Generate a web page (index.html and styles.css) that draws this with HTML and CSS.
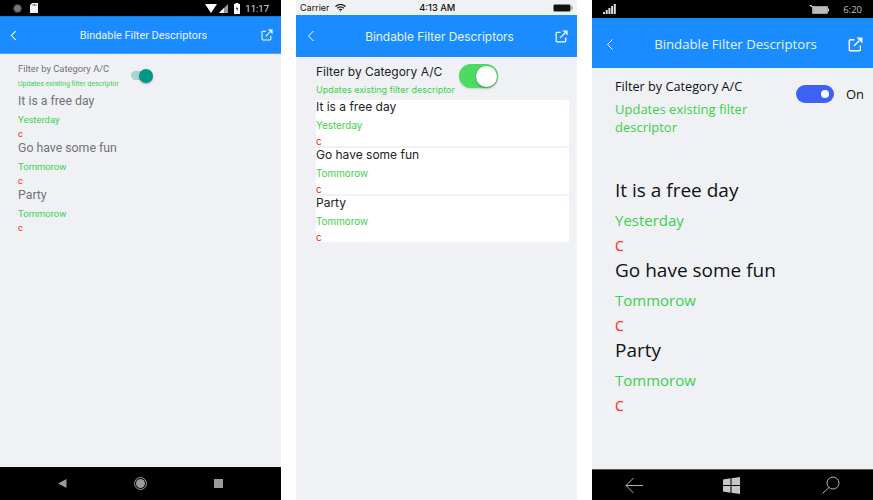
FILE: index.html
```html
<!DOCTYPE html>
<html lang="en">
<head>
    <meta charset="UTF-8" />
    <meta name="viewport" content="width=device-width, initial-scale=1.0" />
    <title>Bindable Filter Descriptors</title>
    <link rel="stylesheet" href="styles.css">
</head>
<body>
    <div class="page">
        <!-- Android -->
        <div class="phone android">
            <div class="status">
                <div class="status-left">
                    <span class="rec-dot"></span>
                    <svg width="8" height="10" viewBox="0 0 8 10"><path d="M2 0h6v10H0V2z" fill="#f2f2f2"/><path d="M3 1v2M4.500 1v2M6 1v2" stroke="#555" stroke-width=".7"/></svg>
                </div>
                <div class="status-right">
                    <svg width="12" height="9" viewBox="0 0 12 9"><path d="M0 0h12L6 9z" fill="#fff"/></svg>
                    <svg class="signal" width="9" height="9" viewBox="0 0 9 9"><path d="M9 0v9H0z" fill="#9a9a9a"/><path d="M5 4v5H0z" fill="#fff"/></svg>
                    <svg class="batt" width="6" height="11" viewBox="0 0 6 11"><path d="M1.500 0h3v1H6v10H0V1h1.500z" fill="#fff"/><path d="M3.300 3 1.800 6h1.200l-.3 2.500L4.300 5.300H3z" fill="#222"/></svg>
                    <span class="clock">11:17</span>
                </div>
            </div>
            <div class="bar">
                <svg class="back" viewBox="0 0 8 12"><path d="M6.500 1 1.500 6l5 5" /></svg>
                <span class="bar-title">Bindable Filter Descriptors</span>
                <svg class="share" viewBox="0 0 14 14"><path d="M6 2.500H2.200a1 1 0 0 0-1 1v8.300a1 1 0 0 0 1 1h8.300a1 1 0 0 0 1-1V8M5.500 8.500 10.500 3.500" /><path class="share-head" d="M8 .5h5.500V6z" /></svg>
            </div>
            <div class="content">
                <div class="filter">
                    <div class="filter-text">
                        <div class="filter-name">Filter by Category A/C</div>
                        <div class="filter-desc">Updates existing filter descriptor</div>
                    </div>
                    <div class="switch"><span class="knob"></span></div>
                </div>
                <div class="list">
                    <div class="item"><div class="item-title">It is a free day</div><div class="item-when">Yesterday</div><div class="item-cat">c</div></div>
                    <div class="item"><div class="item-title">Go have some fun</div><div class="item-when">Tommorow</div><div class="item-cat">c</div></div>
                    <div class="item"><div class="item-title">Party</div><div class="item-when">Tommorow</div><div class="item-cat">c</div></div>
                </div>
            </div>
            <div class="nav">
                <svg width="9" height="9" viewBox="0 0 9 9"><path d="M8.500 0v9L0 4.500z" fill="#9a9a9a"/></svg>
                <svg width="13" height="13" viewBox="0 0 13 13"><circle cx="6.500" cy="6.500" r="6" fill="none" stroke="#9a9a9a"/><circle cx="6.500" cy="6.500" r="4.500" fill="#9a9a9a"/></svg>
                <svg width="9" height="9" viewBox="0 0 9 9"><rect width="9" height="9" fill="#9a9a9a"/></svg>
            </div>
        </div>

        <!-- iOS -->
        <div class="phone ios">
            <div class="status">
                <div class="status-left">
                    <span class="carrier">Carrier</span>
                    <svg width="11" height="8" viewBox="0 0 11 8"><path d="M.5 2.500C3.500-.2 7.500-.2 10.500 2.500M2.200 4.200c2-1.700 4.600-1.700 6.600 0M3.900 5.900c1-.8 2.200-.8 3.200 0" fill="none" stroke="#111" stroke-width="1.200"/><path d="M4.700 6.700 5.500 7.800 6.300 6.700z" fill="#111"/></svg>
                </div>
                <span class="clock">4:13 AM</span>
                <svg class="ios-batt" width="20" height="8" viewBox="0 0 20 8"><rect x=".5" y=".5" width="17" height="7" rx="1.500" fill="#111" stroke="#888"/><rect x="18.200" y="2.500" width="1.300" height="3" fill="#888"/></svg>
            </div>
            <div class="bar">
                <svg class="back" viewBox="0 0 8 12"><path d="M6.500 1 1.500 6l5 5" /></svg>
                <span class="bar-title">Bindable Filter Descriptors</span>
                <svg class="share" viewBox="0 0 14 14"><path d="M6 2.500H2.200a1 1 0 0 0-1 1v8.300a1 1 0 0 0 1 1h8.300a1 1 0 0 0 1-1V8M5.500 8.500 10.500 3.500" /><path class="share-head" d="M8 .5h5.500V6z" /></svg>
            </div>
            <div class="content">
                <div class="filter">
                    <div class="filter-text">
                        <div class="filter-name">Filter by Category A/C</div>
                        <div class="filter-desc">Updates existing filter descriptor</div>
                    </div>
                    <div class="switch"><span class="knob"></span></div>
                </div>
                <div class="list">
                    <div class="item"><div class="item-title">It is a free day</div><div class="item-when">Yesterday</div><div class="item-cat">c</div></div>
                    <div class="item"><div class="item-title">Go have some fun</div><div class="item-when">Tommorow</div><div class="item-cat">c</div></div>
                    <div class="item"><div class="item-title">Party</div><div class="item-when">Tommorow</div><div class="item-cat">c</div></div>
                </div>
            </div>
        </div>

        <!-- Windows -->
        <div class="phone windows">
            <div class="status">
                <svg width="13" height="10" viewBox="0 0 13 10"><path d="M0 8h2v2H0zM2.700 6h2v4h-2zM5.400 4h2v6h-2zM8.100 2h2v8h-2zM10.800 0h2v10h-2z" fill="#ddd"/></svg>
                <div class="status-right">
                    <svg width="20" height="9" viewBox="0 0 20 9"><path d="M0 0h2.500l1 2H2.200z" fill="#ccc"/><rect x="3.500" y="1.500" width="15" height="7" fill="#bbb" stroke="#ccc" stroke-width=".6"/><rect x="18.800" y="3.500" width="1.200" height="3" fill="#ccc"/></svg>
                    <span class="clock">6:20</span>
                </div>
            </div>
            <div class="bar">
                <svg class="back" viewBox="0 0 8 12"><path d="M6.500 1 1.500 6l5 5" /></svg>
                <span class="bar-title">Bindable Filter Descriptors</span>
                <svg class="share" viewBox="0 0 14 14"><path d="M6 2.500H2.200a1 1 0 0 0-1 1v8.300a1 1 0 0 0 1 1h8.300a1 1 0 0 0 1-1V8M5.500 8.500 10.500 3.500" /><path class="share-head" d="M8 .5h5.500V6z" /></svg>
            </div>
            <div class="content">
                <div class="filter">
                    <div class="filter-text">
                        <div class="filter-name">Filter by Category A/C</div>
                        <div class="filter-desc">Updates existing filter descriptor</div>
                    </div>
                    <div class="switch-wrap">
                        <div class="switch"><span class="knob"></span></div>
                        <span class="switch-label">On</span>
                    </div>
                </div>
                <div class="list">
                    <div class="item"><div class="item-title">It is a free day</div><div class="item-when">Yesterday</div><div class="item-cat">C</div></div>
                    <div class="item"><div class="item-title">Go have some fun</div><div class="item-when">Tommorow</div><div class="item-cat">C</div></div>
                    <div class="item"><div class="item-title">Party</div><div class="item-when">Tommorow</div><div class="item-cat">C</div></div>
                </div>
            </div>
            <div class="nav">
                <svg width="18" height="17" viewBox="0 0 18 17"><path d="M18 8.500H1M8.500 1 1 8.500 8.500 16" fill="none" stroke="#b5b5b5"/></svg>
                <svg class="win-logo" width="17" height="17" viewBox="0 0 17 17"><path d="M0 2.500 7.500 1.300v6.700H0zM8.500 1.200 17 0v8H8.500zM0 9h7.500v6.700L0 14.500zM8.500 9H17v8l-8.500-1.200z" fill="#c8c8c8"/></svg>
                <svg width="18" height="18" viewBox="0 0 18 18"><circle cx="11" cy="7" r="6" fill="none" stroke="#b5b5b5"/><path d="M7 11.500.5 17.500" stroke="#b5b5b5" fill="none"/></svg>
            </div>
        </div>
    </div>
</body>
</html>
```

FILE: styles.css
```css
body {
    margin: 0;
    background-color: #ffffff;
    overflow: hidden;
}

.page {
    display: flex;
    gap: 15px;
    height: 500px;
}

.phone {
    width: 281px;
    height: 500px;
    display: flex;
    flex-direction: column;
    background-color: #eff1f5;
    overflow: hidden;
}

.status {
    display: flex;
    justify-content: space-between;
    align-items: center;
    flex-shrink: 0;
    background-color: #000;
    color: #fff;
}

.status-left,
.status-right {
    display: flex;
    align-items: center;
}

.bar {
    display: flex;
    align-items: center;
    justify-content: space-between;
    flex-shrink: 0;
    background-color: #1a8cff;
    color: #fff;
}

.back,
.share {
    fill: none;
    stroke: #fff;
    flex-shrink: 0;
}

.share-head {
    fill: #fff;
    stroke: none;
}

.bar-title {
    flex: 1;
    text-align: center;
    color: #e8f3ff;
}

.content {
    flex: 1;
}

.filter {
    display: flex;
    align-items: flex-start;
}

.filter-name {
    white-space: nowrap;
}

.filter-desc {
    color: #3ad24a;
}

.item-when {
    color: #3ad24a;
}

.item-cat {
    color: #ff2020;
}

.switch {
    position: relative;
    flex-shrink: 0;
}

.knob {
    position: absolute;
    border-radius: 50%;
}

.nav {
    display: flex;
    align-items: center;
    flex-shrink: 0;
    background-color: #000;
}

/* Android */
.android {
    font-family: Roboto, sans-serif;
}

.android .status {
    height: 16px;
    padding: 0 12px 0 13px;
}

.android .status-left {
    gap: 8px;
}

.android .signal {
    margin-left: 2px;
}

.android .batt {
    margin-left: 6px;
}

.rec-dot {
    width: 9px;
    height: 9px;
    border-radius: 50%;
    background-color: #777;
    box-sizing: border-box;
    border: 1px solid #333;
}

.android .clock {
    font-size: 9.5px;
    margin-left: 5px;
    color: #e0e0e0;
}

.android .bar {
    height: 38px;
    padding: 0 8px 0 10px;
    border-top: 1px solid #1577d8;
    border-bottom: 1px solid #4aa5ff;
    box-sizing: border-box;
}

.android .back {
    width: 7px;
    height: 11px;
    stroke-width: 1.2;
}

.android .share {
    width: 12px;
    height: 12px;
    stroke-width: 1.2;
}

.android .bar-title {
    font-size: 10.9px;
    padding: 1px 0 0 9px;
}

.android .content {
    padding: 8px 0 0 18px;
    color: #737373;
}

.android .filter {
    gap: 12px;
    height: 30px;
}

.android .filter-name {
    font-size: 9.4px;
    line-height: 14px;
}

.android .filter-desc {
    font-size: 7px;
    line-height: 16px;
}

.android .switch {
    width: 19px;
    height: 9px;
    margin-top: 9px;
    border-radius: 5px;
    background-color: #a8d5d1;
}

.android .knob {
    width: 14px;
    height: 14px;
    right: -3px;
    top: -2.500px;
    background-color: #009688;
    box-shadow: 0 1px 2px rgba(0, 0, 0, 0.3);
}

.android .item {
    height: 47px;
}

.android .item-title {
    font-size: 12.3px;
    line-height: 18px;
}

.android .item-when {
    font-size: 9.5px;
    line-height: 20px;
}

.android .item-cat {
    font-size: 9px;
    line-height: 9px;
}

.android .nav {
    height: 33px;
    justify-content: space-between;
    padding: 0 58px;
}

/* iOS */
.ios {
    font-family: Inter, "Liberation Sans", sans-serif;
}

.ios .status {
    height: 15px;
    background-color: #eff1f5;
    color: #111;
    padding: 0 4px 0 4px;
    font-size: 9px;
}

.ios .status-left {
    gap: 5px;
}

.ios .clock {
    font-size: 9.3px;
    font-weight: 500;
    margin-right: 24px;
}

.ios .bar {
    height: 42px;
    padding: 0 9px 0 11px;
}

.ios .back {
    width: 8px;
    height: 12px;
    stroke-width: 1;
}

.ios .share {
    width: 13px;
    height: 13px;
    stroke-width: 1.300;
}

.ios .bar-title {
    font-size: 11.9px;
    padding-left: 9px;
}

.ios .content {
    padding: 6px 8px 0 20px;
    color: #222;
}

.ios .filter {
    gap: 4px;
    height: 37px;
}

.ios .filter-name {
    font-size: 12px;
    line-height: 18px;
}

.ios .filter-desc {
    font-size: 9px;
    line-height: 14px;
    margin-top: 2px;
}

.ios .switch {
    width: 39px;
    height: 24px;
    margin-top: 1px;
    border-radius: 12px;
    background-color: #4cd964;
    box-shadow: 0 1px 2px rgba(0, 0, 0, 0.15);
}

.ios .knob {
    width: 21px;
    height: 21px;
    right: 1px;
    top: 1.500px;
    background-color: #fff;
    box-shadow: 0 1px 2px rgba(0, 0, 0, 0.3);
}

.ios .item {
    background-color: #fff;
    height: 46px;
    margin-bottom: 2px;
}

.ios .item-title {
    font-size: 12px;
    line-height: 14px;
}

.ios .item-when {
    font-size: 9.9px;
    line-height: 22px;
}

.ios .item-cat {
    font-size: 10px;
    line-height: 10px;
}

/* Windows */
.windows {
    font-family: "Open Sans", sans-serif;
}

.windows .status {
    height: 18px;
    padding: 0 11px 0 11px;
}

.windows .status-right {
    gap: 14px;
}

.windows .clock {
    font-size: 9.500px;
    color: #c0c0c0;
}

.windows .bar {
    height: 50px;
    padding: 2px 10px 0 14px;
    box-sizing: border-box;
}

.windows .back {
    width: 8px;
    height: 13px;
    stroke-width: 1;
}

.windows .share {
    width: 15px;
    height: 15px;
    stroke-width: 1.300;
}

.windows .bar-title {
    font-size: 13.2px;
    padding-left: 9px;
}

.windows .content {
    padding: 8px 0 0 23px;
    color: #111;
}

.windows .filter {
    height: 100px;
}

.windows .filter-text {
    width: 175px;
}

.windows .filter-name {
    font-size: 12.7px;
    line-height: 20px;
}

.windows .filter-desc {
    font-size: 13px;
    line-height: 18px;
    margin-top: 4px;
}

.switch-wrap {
    display: flex;
    align-items: center;
    gap: 12px;
    margin: 9px 0 0 6px;
}

.windows .switch {
    width: 38px;
    height: 18px;
    border-radius: 9px;
    background-color: #3d63f5;
}

.windows .knob {
    width: 8px;
    height: 8px;
    right: 5px;
    top: 5px;
    background-color: #fff;
}

.switch-label {
    font-size: 13px;
}

.windows .item {
    height: 80px;
}

.windows .item-title {
    font-size: 19px;
    line-height: 28px;
}

.windows .item-when {
    font-size: 15px;
    line-height: 32px;
}

.windows .item-cat {
    font-size: 14px;
    line-height: 20px;
}

.windows .nav {
    height: 31px;
    justify-content: space-between;
    padding: 0 33px;
    border-top: 1px solid #555;
    box-sizing: border-box;
}

.win-logo {
    margin-right: 2px;
}
```
